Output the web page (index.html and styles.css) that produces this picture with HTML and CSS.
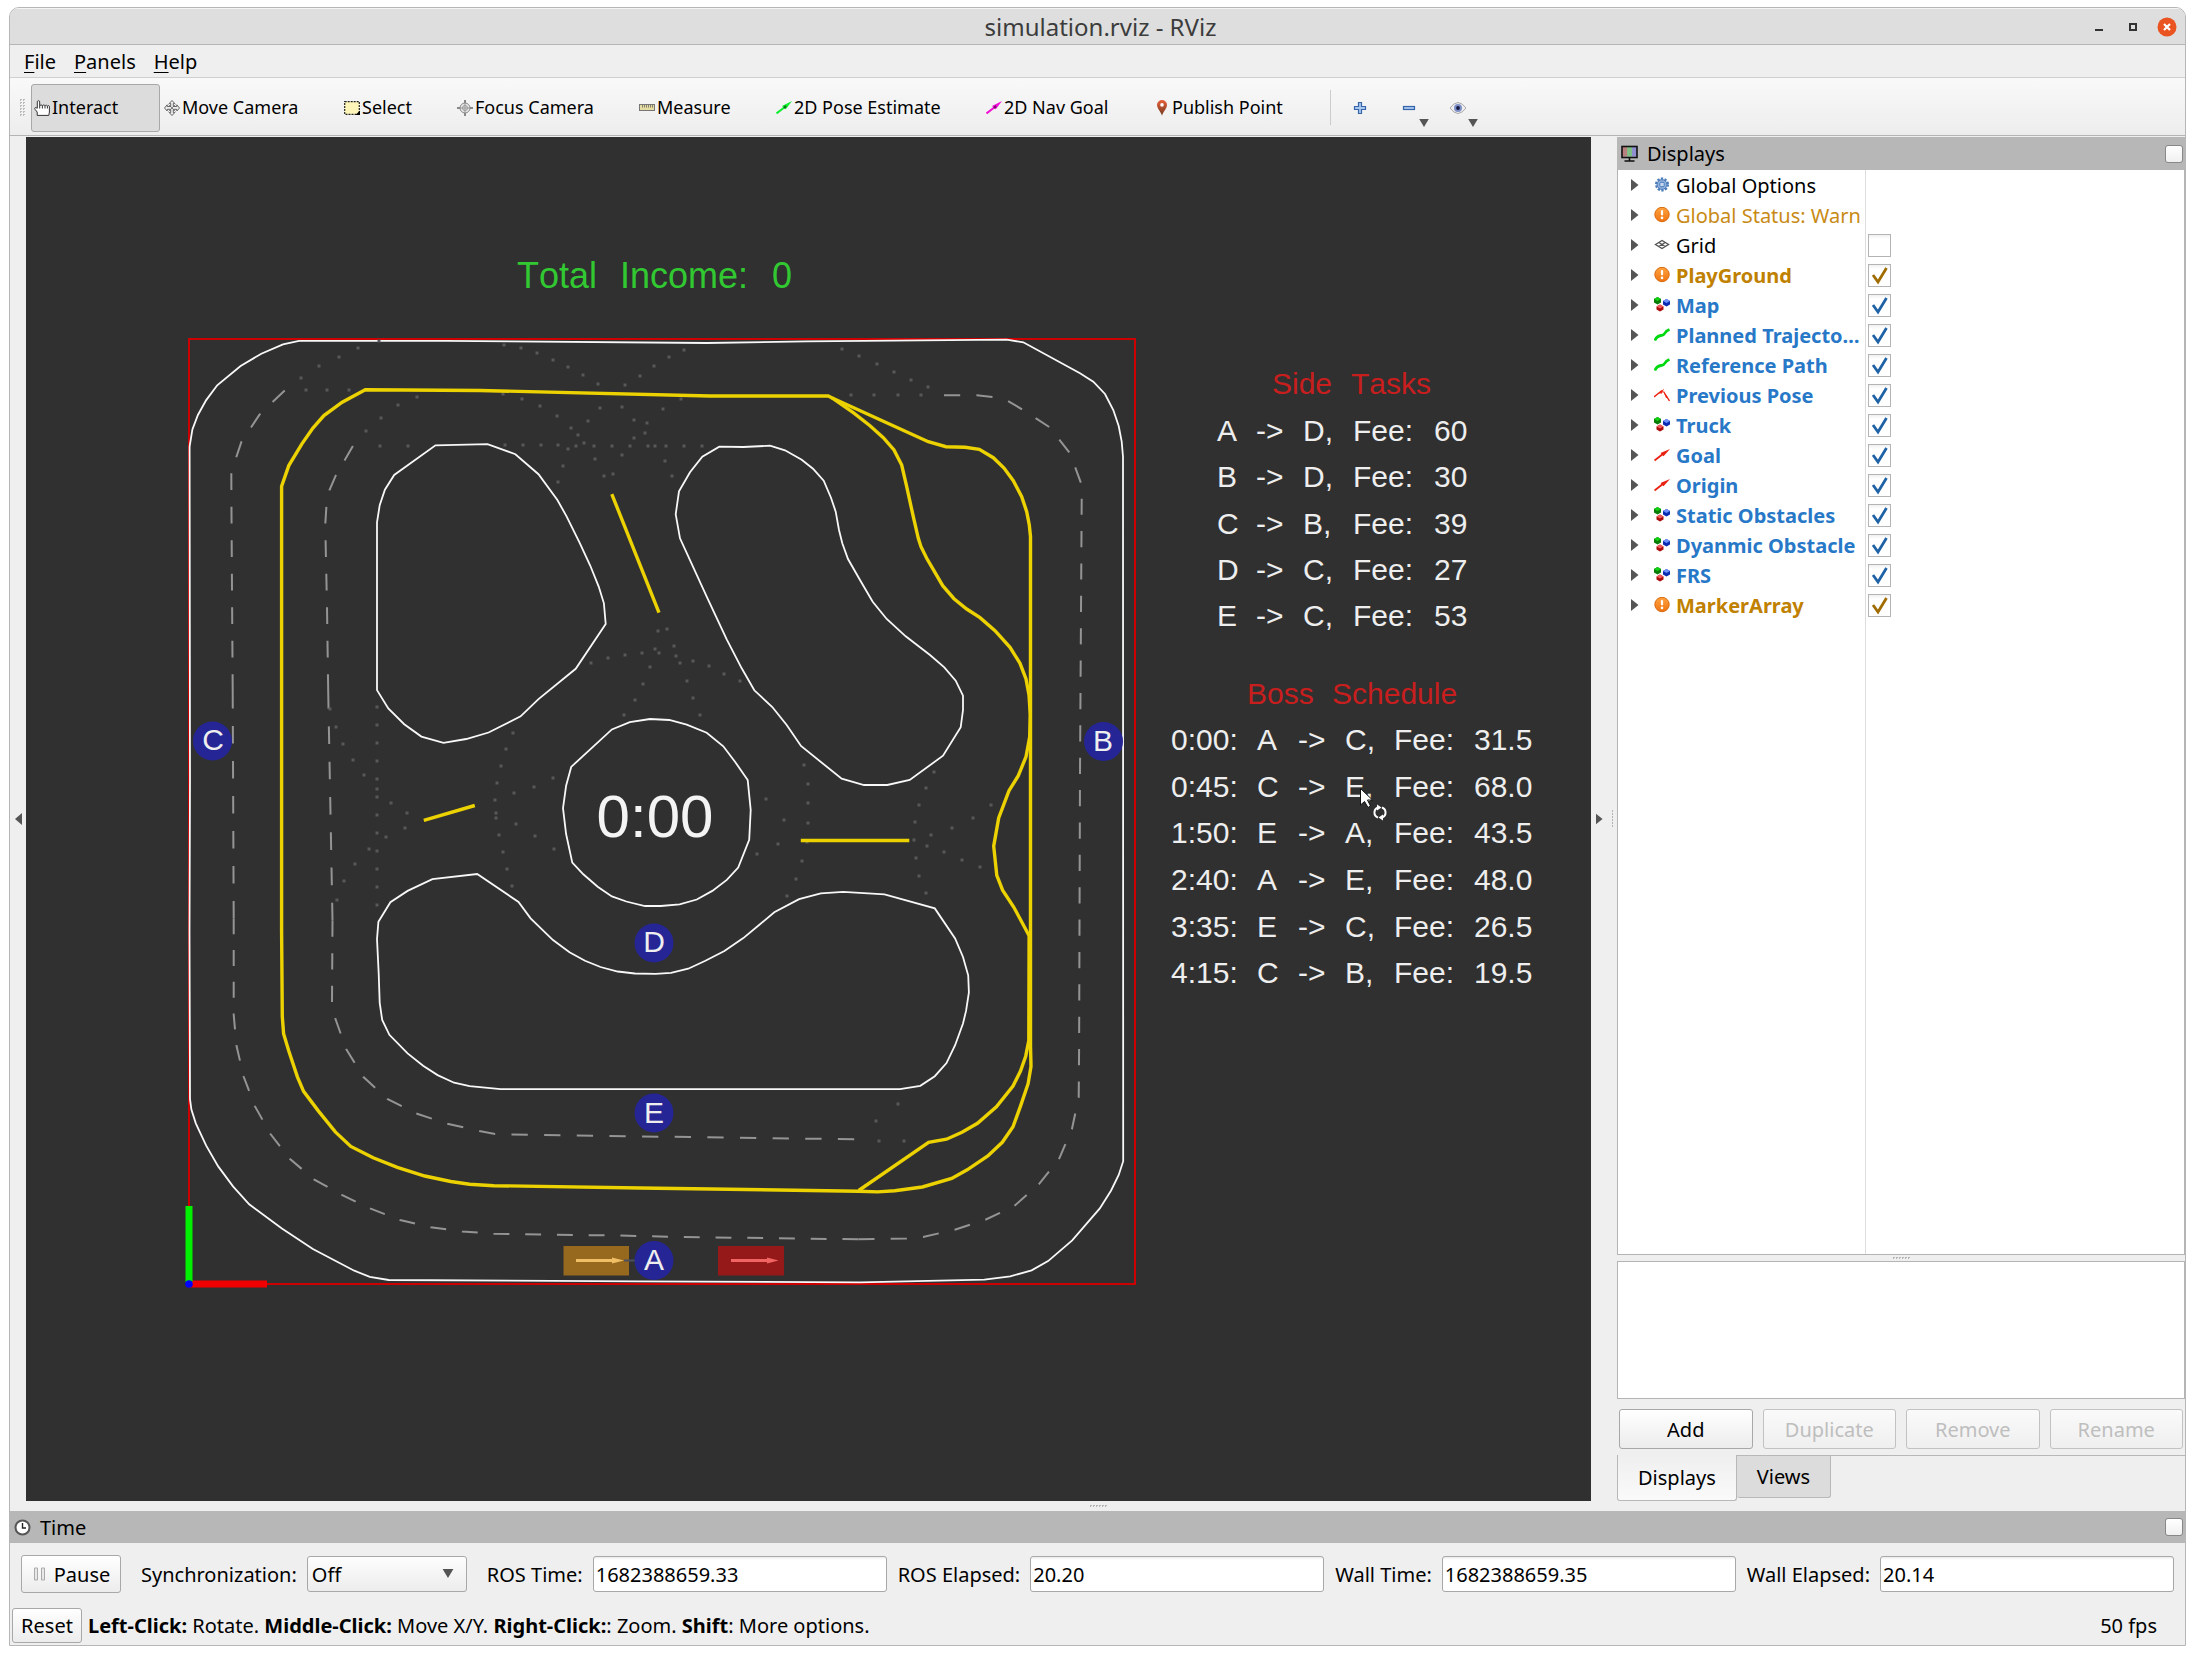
FILE: index.html
```html
<!DOCTYPE html>
<html lang="en">
<head>
<meta charset="utf-8">
<title>simulation.rviz - RViz</title>
<link rel="stylesheet" href="styles.css">
</head>
<body>
<svg class="defs" aria-hidden="true">
  <linearGradient id="orange" x1="0" y1="0" x2="0" y2="1"><stop offset="0" stop-color="#ffa340"/><stop offset="1" stop-color="#ee7410"/></linearGradient>
  <linearGradient id="pin" x1="0" y1="0" x2="0" y2="1"><stop offset="0" stop-color="#e8603a"/><stop offset="1" stop-color="#6e3a20"/></linearGradient>
  <symbol id="i-warn" viewBox="0 0 16 16"><circle cx="8" cy="7.500" r="7.200" fill="url(#orange)" stroke="#d9680c"/><path d="M8 3.200v5" stroke="#fff" stroke-width="2.2"/><circle cx="8" cy="10.900" r="1.3" fill="#fff"/></symbol>
  <symbol id="i-gear" viewBox="0 0 16 16"><circle cx="8" cy="7.500" r="5.900" fill="none" stroke="#4a7ab8" stroke-width="2.200" stroke-dasharray="2.300 1.407"/><circle cx="8" cy="7.500" r="4.900" fill="#8fb2de" stroke="#4a7ab8"/><rect x="5.800" y="5.300" width="4.400" height="4.400" rx="1" fill="#c5d8f0" stroke="#4a7ab8"/></symbol>
  <symbol id="i-grid" viewBox="0 0 16 16"><path d="M1.5 7.500 8 3.500l6.500 4L8 11.500zM4.800 5.500l6.400 4M11.200 5.500l-6.400 4" fill="none" stroke="#555" stroke-width="1.400"/></symbol>
  <symbol id="i-cubes" viewBox="0 0 16 16"><path d="m0 2 3.500-2L7 2v3.500L3.500 7.500 0 5.500z" fill="#077a07"/><path d="m0 2 3.500-2L7 2 3.500 4z" fill="#12d012"/><path d="m9 4 3.500-2L16 4v3.500l-3.500 2-3.500-2z" fill="#0a2cb0"/><path d="m9 4 3.500-2L16 4l-3.500 2z" fill="#6f92ff"/><path d="m2.500 9.500 3.500-2 3.500 2v3L6 14.500l-3.500-2z" fill="#a80c0c"/><path d="m2.500 9.500 3.500-2 3.500 2-3.500 2z" fill="#f25c5c"/></symbol>
  <symbol id="i-path" viewBox="0 0 16 16"><path d="M.8 13.500C2.500 9.500 4.500 8.800 7 8.500s3.200-.8 4-2.500 2-2.500 4.500-3.500" fill="none" stroke="#00d810" stroke-width="2.800"/></symbol>
  <symbol id="i-poses" viewBox="0 0 16 16"><path d="m0 10 8-6.500M9.500 4.500 15.500 14" stroke="#ee2010" stroke-width="1.400"/><path d="m5 6.500 5-5-2 5zM10 6l2 5 2-.5z" fill="#ee2010"/></symbol>
  <symbol id="i-arrow" viewBox="0 0 16 16"><path d="m.5 13.500 9-7" stroke="currentColor" stroke-width="1.800"/><path d="M16 2 9.500 9.200 6.500 6z" fill="currentColor"/></symbol>
  <symbol id="i-expand" viewBox="0 0 8 12"><path d="M0 0l7.500 6L0 12z" fill="#555"/></symbol>
  <symbol id="i-down" viewBox="0 0 12 10"><path d="M0 0h12L6 10z" fill="#555"/></symbol>
</svg>

<div class="window">
  <header class="titlebar">
    <h1 class="title">simulation.rviz - RViz</h1>
    <div class="window-buttons">
      <button class="wbtn" aria-label="Minimize"><svg width="18" height="18" viewBox="0 0 18 18"><path d="M5 12h8" stroke="#333" stroke-width="2"/></svg></button>
      <button class="wbtn" aria-label="Maximize"><svg width="18" height="18" viewBox="0 0 18 18"><rect x="6" y="6" width="6" height="6" fill="none" stroke="#333" stroke-width="2"/></svg></button>
      <button class="wbtn" aria-label="Close"><svg width="20" height="20" viewBox="0 0 20 20"><circle cx="10" cy="10" r="9.500" fill="#e95420"/><path d="m7 7 6 6M13 7l-6 6" stroke="#fff" stroke-width="2.200"/></svg></button>
    </div>
  </header>

  <nav class="menubar">
    <button class="menu"><u>F</u>ile</button>
    <button class="menu"><u>P</u>anels</button>
    <button class="menu"><u>H</u>elp</button>
  </nav>

  <div class="toolbar">
    <span class="grip"></span>
    <div class="tools">
      <button class="tool active"><svg class="ticon" viewBox="0 0 16 16"><path d="M4.500.7c-1 0-1.200.6-1.200 1.200v6.300L1.800 7.600C.7 7.400.4 8.500 1 9.300L3.200 12v3.400h11.600L15.400 12V6.500c0-1.200-1.900-1.200-2 0 0-1.600-2.300-1.600-2.400-.3-.1-1.600-2.400-1.500-2.500-.3-.2-1.200-2.500-1.200-2.800 0v-4c0-.7-.4-1.200-1.200-1.200z" fill="#fff" stroke="#333"/><path d="M5.700 6v2.500M8.400 6v2.500M11 6.200v2.300M13.400 6.500v2" stroke="#333"/></svg>Interact</button>
      <button class="tool"><svg class="ticon" viewBox="0 0 16 16"><path d="M8 .5 10.800 3.500H9.300V6.500h3.500V4.800L15.500 8 12.800 11V9.300H9.300v3.200h1.500L8 15.500 5.200 12.500h1.500V9.300H3.200V11L.5 8l2.700-3.200v1.700h3.500v-3H5.200z" fill="#eee" stroke="#555" stroke-width=".900"/><path d="M4.500 4.500 11.500 11.500M11.500 4.500 4.500 11.500" stroke="#666" stroke-width=".800"/></svg>Move Camera</button>
      <button class="tool"><svg class="ticon" viewBox="0 0 16 16"><rect x=".700" y="1.700" width="14.600" height="12.600" fill="#fdf6b8" stroke="#222" stroke-width="1.200" stroke-dasharray="2 1"/><path d="M16 10.500V15h-4.500z"/></svg>Select</button>
      <button class="tool"><svg class="ticon" viewBox="0 0 16 16"><path d="M8 0v16M0 8h16" stroke="#888" stroke-width="2"/><circle cx="8" cy="8" r="5" fill="#e6e6e6" stroke="#888"/><circle cx="8" cy="8" r="2.500" fill="none" stroke="#999"/><path d="M8 3v10M3 8h10" stroke="#999"/></svg>Focus Camera</button>
      <button class="tool"><svg class="ticon" viewBox="0 0 16 16"><rect x=".500" y="4.500" width="15" height="6" fill="#e4dca0" stroke="#777"/><path d="M3.500 5v2.500M5.500 5v2.500M7.500 5v2.500M9.500 5v2.500M11.500 5v2.500M13.500 5v2.500" stroke="#666" stroke-width=".800"/></svg>Measure</button>
      <button class="tool"><svg class="ticon green" viewBox="0 0 16 16"><path d="m.5 13.500 9-7" stroke="currentColor" stroke-width="2"/><path d="M16 1 9.800 9.200 6 6z" fill="currentColor"/><path d="m8 8 2-2" stroke="#0a6a1a" stroke-width="2"/></svg>2D Pose Estimate</button>
      <button class="tool"><svg class="ticon magenta" viewBox="0 0 16 16"><path d="m.5 13.500 9-7" stroke="currentColor" stroke-width="2"/><path d="M16 1 9.800 9.200 6 6z" fill="currentColor"/><path d="m8 8 2-2" stroke="#7a0a6a" stroke-width="2"/></svg>2D Nav Goal</button>
      <button class="tool"><svg class="ticon" viewBox="0 0 16 16"><path d="M8 15.800C7 11.500 3 8.500 3 4.900a5 4.800 0 0 1 10 0c0 3.600-4 6.600-5 10.900z" fill="url(#pin)"/><circle cx="8" cy="4.900" r="1.800" fill="#fff"/></svg>Publish Point</button>
    </div>
    <span class="separator"></span>
    <button class="mini" aria-label="Add tool"><svg width="14" height="18" viewBox="0 0 14 18"><path d="M5.500 3.500h3v4h4v3h-4v4h-3v-4h-4v-3h4z" fill="#a8c8f0" stroke="#3565a8" stroke-width="1.200"/></svg></button>
    <button class="mini" aria-label="Remove tool"><svg width="14" height="18" viewBox="0 0 14 18"><rect x="1.500" y="7.500" width="11" height="3" fill="#a8c8f0" stroke="#3565a8" stroke-width="1.200"/></svg><svg class="drop" width="12" height="8"><use href="#i-down"/></svg></button>
    <button class="mini" aria-label="Visibility"><svg width="16" height="18" viewBox="0 0 16 18"><path d="M0 9q8-11 16 0-8 11-16 0z" fill="#eee" stroke="#aaa"/><circle cx="8" cy="9" r="4" fill="#7f8fc8"/><circle cx="8" cy="9" r="1.900" fill="#151a40"/></svg><svg class="drop" width="12" height="8"><use href="#i-down"/></svg></button>
  </div>

  <main class="main">
    <button class="collapse" aria-label="Hide left dock"><svg width="7" height="12" viewBox="0 0 7 12"><path d="M7 0v12L0 6z" fill="#555"/></svg></button>
    <svg class="scene" viewBox="26 137 1565 1364" preserveAspectRatio="xMinYMin meet">
      <g class="bounds">
        <path d="M189 339H1135V1284H189z"/>
      </g>
      <g class="wall">
        <path d="M190 780 189.600 446.600 192.400 429.400 197.900 415 206.200 400.100 217.200 385.300 240.600 366 261.300 353.700 283 344.400 299.100 340.900 445.500 340.900 706.700 343 806.700 341.300 1006.700 339.700 1023.300 342.300 1080 373.300 1093.300 381.700 1105 394 1113.300 410 1118.700 426 1121.700 441.700 1123 456.700 1123.200 1161.200 1118.700 1175 1111.100 1190.500 1099.800 1208.400 1072.200 1240.400 1048.100 1261.100 1031.600 1270.400 1010.200 1276.300 984.400 1279.700 860.400 1282.300 640 1281.400 388.700 1280 369.800 1276.900 354.300 1270.700 312.900 1249 281.900 1228.400 249.200 1204.300 233 1186.400 218.200 1166.400 206.200 1145.700 195.800 1123.300 191.400 1109.600 190 1099.200 189.500 932z"/>
        <path d="M435.500 445.300 487.500 444.200 515.400 454.200 538.500 474.200 557.400 500 566.700 516.600 579.800 543.100 590.200 565.500 598.800 586.800 603.900 603.300 605.700 624 575.700 668.800 538.500 699.100 520.600 716.300 488.600 732.500 466.200 739 443.500 742.800 421.400 736.600 404.200 724.200 388.300 708.400 377 690.100 377 522.400 379.700 505.200 384.900 489.700 394.200 474.900z"/>
        <path d="M719.300 446.700 743.300 447 770 445.700 785 450.300 801.700 459.700 813 468.700 823.700 480.700 831 497.700 835.700 511.700 839 530 842.300 543.300 848 559 860 580 872.700 601.700 886.700 619 905.700 636.300 930 655 944.300 667.300 955.700 680.700 963 695.700 963 710 960.700 727.300 943 755.700 909.700 780 887.300 785 864 785 841.700 778.700 801 746 786.700 725 772.300 707 754.300 690.300 741.700 668.300 726.700 639.300 706.700 596.700 680 538.300 675.700 514.300 679 491.300 690 472.300 702.300 456.700z"/>
        <path d="M650 719 669.300 720 686.700 724.700 706.700 732.700 723.300 746.300 735 761.700 747.700 780 750.700 810 749.200 839.900 738.200 867.500 726.800 879.900 712.300 890.900 696.800 899.500 679.600 904.300 660.700 906 645 906 626.300 901.500 611.900 896.400 597.700 886.700 583.300 874.300 572.300 862.600 566.100 834 563 808.200 566.100 785.800 571.200 766.900 611.900 729.400 629.800 722.200z"/>
        <path d="M432.400 879.200 477.200 874 518.500 901.900 530.600 918.400 553 940.100 569.500 952.200 585 960.800 600.500 967 617.700 971.500 634.900 973.500 655.600 973.900 671 972.800 688.200 968.700 705.400 960.800 724.400 951.100 743.300 938.100 758.800 925.300 774.300 912.200 799.100 899.100 820.800 893.300 843.200 891.900 884.500 894.300 934.800 908.400 955.100 938.400 963 957 968.200 975.300 968.900 992.500 966.100 1010.700 963 1023.500 955.100 1045.200 946.500 1063.100 934.800 1076.200 920.300 1085.800 900 1089.200 500.600 1089.200 469.600 1086.100 454.100 1082.700 437.600 1075.100 423.100 1065.800 407.600 1053.400 389.400 1034.800 382.200 1020 379.700 1002.800 378.700 973.500 377 939.100 378.400 921.900 390.400 902.200 407.600 890.900z"/>
      </g>
      <g class="dashed">
        <path pathLength="19" d="M284.700 390.500 259.500 414.600 241.300 442.100 231.300 472 231.500 515 232.700 691"/>
        <path pathLength="13" d="M232.700 691 233.700 918.400"/>
        <path pathLength="53" d="M233.700 918.400 233.700 1014.800 236.500 1045.800 243.700 1076.800 255 1106.400 270.500 1134 289.800 1158.700 313.900 1179.400 341.800 1194.900 370.700 1208.700 400 1220 430.700 1227.300 462 1231.400 493.700 1233.800 620.400 1235.600 684 1237 858.300 1239.300"/>
        <path pathLength="67" d="M858.300 1239.300 906.500 1238.500 923.100 1237 954.800 1229.700 985.400 1219.700 1014.300 1206 1038.800 1184.300 1058.800 1159.500 1071.900 1129.200 1078.700 1097.500 1079.100 1050 1080 774 1081.700 499.300 1081 483 1070 453.300 1049.700 427.300 1022.700 409.700 1008 401 993.300 397 976.700 395.300 944 395.300"/>
        <path pathLength="15" d="M352.900 446 335.600 475.900 329.400 490.300 326.300 507.900 325.300 524.100 325.600 541 327 607 328.200 691.100"/>
        <path pathLength="13" d="M328.200 691.100 332.500 920.500"/>
        <path pathLength="41" d="M332.500 920.500 332 1002.500 335.300 1018.600 346.300 1049.300 363.200 1076.800 387.300 1098.900 416.200 1113.400 447.200 1123.700 479.300 1131 495.100 1134 511.300 1134.400 640 1136.400 854.200 1139.300"/>
      </g>
      <path class="dots" d="M358 348h0M339 357h0M319 366h0M301 378h0M379 341h0M306 390h0M327 390h0M349 390h0M417 397h0M398 405h0M381 418h0M366 431h0M380 446h0M408 446h0M504 345h0M521 348h0M537 353h0M553 360h0M568 367h0M583 375h0M598 384h0M684 350h0M669 357h0M654 366h0M640 376h0M625 385h0M503 394h0M522 399h0M540 406h0M557 416h0M571 428h0M578 435h0M584 443h0M595 459h0M604 476h0M600 408h0M588 421h0M568 449h0M563 466h0M558 482h0M622 407h0M634 420h0M645 433h0M655 446h0M665 461h0M672 476h0M681 399h0M663 409h0M647 423h0M634 438h0M622 455h0M613 474h0M505 445h0M523 445h0M541 445h0M558 445h0M576 446h0M594 446h0M612 446h0M630 446h0M648 446h0M666 446h0M684 446h0M702 446h0M658 631h0M667 629h0M674 646h0M676 656h0M680 663h0M693 661h0M709 666h0M724 674h0M740 681h0M659 653h0M655 649h0M642 653h0M625 655h0M608 658h0M591 663h0M650 667h0M643 684h0M635 700h0M624 715h0M687 681h0M693 698h0M700 715h0M330 709h0M336 727h0M343 744h0M353 760h0M364 775h0M377 707h0M377 725h0M377 743h0M377 761h0M377 779h0M377 789h0M377 797h0M377 815h0M377 833h0M377 851h0M377 869h0M377 887h0M377 905h0M513 733h0M506 749h0M501 766h0M553 778h0M391 803h0M407 813h0M405 828h0M386 837h0M369 849h0M355 864h0M344 881h0M337 900h0M497 783h0M495 800h0M496 813h0M496 818h0M499 835h0M503 852h0M507 869h0M512 886h0M534 787h0M514 793h0M516 824h0M535 836h0M554 849h0M842 349h0M859 356h0M877 364h0M894 372h0M911 380h0M928 387h0M851 395h0M874 395h0M898 395h0M921 395h0M804 765h0M808 784h0M808 803h0M808 823h0M807 842h0M802 861h0M796 879h0M787 896h0M766 799h0M784 820h0M778 844h0M757 854h0M934 772h0M926 788h0M919 805h0M915 822h0M914 840h0M916 858h0M919 876h0M926 893h0M991 805h0M973 818h0M952 828h0M931 835h0M927 846h0M944 852h0M962 860h0M980 867h0M898 1104h0M876 1121h0M879 1141h0M904 1141h0"/>
      <g class="lane">
        <path d="M281.600 780 281.600 486.200 288.800 465.600 301.900 443.900 312.900 428 323.900 415.600 342.200 402.200 365.300 389.800 480 390.500 710 396 828.300 396 831.700 397.700 928.300 441.700 946 446.700 965 447.300 979.300 449.300 993.300 457.700 1004 468 1013.300 480.700 1021.700 496.700 1026.700 511.700 1029.300 525 1030.500 536.700 1030.500 1045.800 1031 1066.500 1028.100 1083.700 1020.500 1106.100 1013 1126.800 1002.300 1142.300 987.800 1156 967.200 1169.800 951.700 1178.400 922.400 1187 894.800 1190.800 877.600 1191.900 858.700 1191.200 640 1188 493.700 1185.700 469.600 1184.300 450.700 1181.500 424.800 1176 397.300 1167.400 373.200 1157.800 350.800 1146.400 335.300 1131.900 318.100 1110.600 303.600 1091.300 297.400 1076.800 288.800 1051 283.600 1033.800 282.300 1016.600 281.600 932z"/>
        <path d="M831.700 397.700 853.300 412.700 870 425.700 883.300 437.700 894 450 901.700 465 906.700 486.700 913.300 516.700 918.300 538.300 921 546.700 926.700 558.300 942.700 585.700 954 598.700 966.700 609 980 617.700 995 630.700 1010 647.300 1020 663.300 1026 679 1029 695 1030.300 715 1029.700 736.700 1026 756.700 1018.300 775.700 1009 790.700 998.700 818 993.700 846.100 996.800 875.400 1002.600 890.200 1013.700 907 1029.100 935.600 1028.800 1040.700 1025.700 1056.200 1020.500 1071 1013 1086.100 996.400 1106.800 977.500 1123.300 962 1132.300 946.500 1139.200 928.600 1142.300 858.700 1190.500"/>
        <path d="M611.800 494.100 659 612.600M423.800 820.300 474.800 805.500M800.800 840.500H909.300"/>
      </g>
      <g class="axes">
        <path stroke="#f00000" d="M189 1284H267"/>
        <path stroke="#00f000" d="M189 1206V1282"/>
        <circle cx="189" cy="1284" r="3.800" fill="#0000ff"/>
      </g>
      <rect x="563.500" y="1246" width="65.500" height="29.500" fill="#96691e"/>
      <path d="M576 1260.500H614" stroke="#f0be64" stroke-width="3"/><path d="M612 1257.500 624 1260.500 612 1263.500z" fill="#f0be64"/>
      <path d="M624 1260.500H640" stroke="#4d5060" stroke-width="2"/>
      <rect x="718" y="1246" width="66" height="29.500" fill="#961919"/>
      <path d="M731 1260.500H768" stroke="#f06464" stroke-width="3"/><path d="M767 1257.500 778.500 1260.500 767 1263.500z" fill="#f06464"/>
      <g class="badges">
        <circle cx="212.500" cy="741" r="19.500"/><circle cx="1103.500" cy="741.500" r="19.500"/><circle cx="654" cy="943" r="19.500"/><circle cx="654" cy="1113" r="19.500"/><circle cx="654" cy="1260.500" r="19.500"/>
        <text x="213" y="750">C</text><text x="1103" y="751">B</text><text x="654" y="952">D</text><text x="654" y="1123">E</text><text x="654" y="1270">A</text>
      </g>
      <text class="clock" x="655" y="837">0:00</text>
      <text class="income" y="288"><tspan x="517">Total </tspan><tspan x="620">Income: </tspan><tspan x="772">0</tspan></text>
      <g class="board">
        <text class="head" y="394"><tspan x="1272">Side </tspan><tspan x="1351">Tasks</tspan></text>
        <text y="441"><tspan x="1217">A </tspan><tspan x="1256">-&gt; </tspan><tspan x="1303">D, </tspan><tspan x="1353">Fee: </tspan><tspan x="1434">60</tspan></text>
        <text y="487"><tspan x="1217">B </tspan><tspan x="1256">-&gt; </tspan><tspan x="1303">D, </tspan><tspan x="1353">Fee: </tspan><tspan x="1434">30</tspan></text>
        <text y="534"><tspan x="1217">C </tspan><tspan x="1256">-&gt; </tspan><tspan x="1303">B, </tspan><tspan x="1353">Fee: </tspan><tspan x="1434">39</tspan></text>
        <text y="580"><tspan x="1217">D </tspan><tspan x="1256">-&gt; </tspan><tspan x="1303">C, </tspan><tspan x="1353">Fee: </tspan><tspan x="1434">27</tspan></text>
        <text y="626"><tspan x="1217">E </tspan><tspan x="1256">-&gt; </tspan><tspan x="1303">C, </tspan><tspan x="1353">Fee: </tspan><tspan x="1434">53</tspan></text>
        <text class="head" y="704"><tspan x="1247">Boss </tspan><tspan x="1332">Schedule</tspan></text>
        <text y="750"><tspan x="1171">0:00: </tspan><tspan x="1257">A </tspan><tspan x="1298">-&gt; </tspan><tspan x="1345">C, </tspan><tspan x="1394">Fee: </tspan><tspan x="1474">31.5</tspan></text>
        <text y="797"><tspan x="1171">0:45: </tspan><tspan x="1257">C </tspan><tspan x="1298">-&gt; </tspan><tspan x="1345">E, </tspan><tspan x="1394">Fee: </tspan><tspan x="1474">68.0</tspan></text>
        <text y="843"><tspan x="1171">1:50: </tspan><tspan x="1257">E </tspan><tspan x="1298">-&gt; </tspan><tspan x="1345">A, </tspan><tspan x="1394">Fee: </tspan><tspan x="1474">43.5</tspan></text>
        <text y="890"><tspan x="1171">2:40: </tspan><tspan x="1257">A </tspan><tspan x="1298">-&gt; </tspan><tspan x="1345">E, </tspan><tspan x="1394">Fee: </tspan><tspan x="1474">48.0</tspan></text>
        <text y="937"><tspan x="1171">3:35: </tspan><tspan x="1257">E </tspan><tspan x="1298">-&gt; </tspan><tspan x="1345">C, </tspan><tspan x="1394">Fee: </tspan><tspan x="1474">26.5</tspan></text>
        <text y="983"><tspan x="1171">4:15: </tspan><tspan x="1257">C </tspan><tspan x="1298">-&gt; </tspan><tspan x="1345">B, </tspan><tspan x="1394">Fee: </tspan><tspan x="1474">19.5</tspan></text>
      </g>
      <g>
        <path d="M1360.500 788.500V805L1364.500 801.500 1368 807.500 1370.500 806 1367.500 800H1372.500z" fill="#fff" stroke="#111"/>
        <g fill="none" stroke="#fff" stroke-width="2"><path d="M1378 817.500A5.300 5.300 0 0 1 1378 807.500M1382 807.500A5.300 5.300 0 0 1 1382 817.500"/></g>
        <path d="M1377 804.500 1381.500 807.500 1377 810.500zM1383 814.500 1378.500 817.500 1383 820.500z" fill="#fff"/>
      </g>
    </svg>
    <button class="collapse right" aria-label="Hide right dock"><svg width="7" height="12"><use href="#i-expand"/></svg></button>

    <aside class="dock">
      <div class="dock-title">
        <svg width="17" height="17" viewBox="0 0 17 17"><path d="M1 1.500h5v10H1z" fill="#b98080"/><path d="M6 1.500h5v10H6z" fill="#7fbf86"/><path d="M11 1.500h5v10h-5z" fill="#8f8fd0"/><rect x="1" y="1.500" width="15" height="11" fill="none" stroke="#111" stroke-width="1.600"/><path d="M8.500 12.500v3M3.500 16h10" stroke="#111" stroke-width="1.600"/></svg>
        <h2>Displays</h2><button class="float" aria-label="Float panel"></button>
      </div>
      <div class="tree-wrap">
        <table class="tree">
          <tbody>
            <tr><th scope="row"><span class="item"><svg class="exp"><use href="#i-expand"/></svg><svg class="ico"><use href="#i-gear"/></svg><span class="name">Global Options</span></span></th><td></td></tr>
            <tr><th scope="row"><span class="item warn"><svg class="exp"><use href="#i-expand"/></svg><svg class="ico"><use href="#i-warn"/></svg><span class="name">Global Status: Warn</span></span></th><td></td></tr>
            <tr><th scope="row"><label class="item" for="c1"><svg class="exp"><use href="#i-expand"/></svg><svg class="ico"><use href="#i-grid"/></svg><span class="name">Grid</span></label></th><td><input id="c1" type="checkbox"></td></tr>
            <tr><th scope="row"><label class="item warn bold" for="c2"><svg class="exp"><use href="#i-expand"/></svg><svg class="ico"><use href="#i-warn"/></svg><span class="name">PlayGround</span></label></th><td><input id="c2" class="amber" type="checkbox" checked></td></tr>
            <tr><th scope="row"><label class="item on bold" for="c3"><svg class="exp"><use href="#i-expand"/></svg><svg class="ico"><use href="#i-cubes"/></svg><span class="name">Map</span></label></th><td><input id="c3" type="checkbox" checked></td></tr>
            <tr><th scope="row"><label class="item on bold" for="c4"><svg class="exp"><use href="#i-expand"/></svg><svg class="ico"><use href="#i-path"/></svg><span class="name">Planned Trajectory</span></label></th><td><input id="c4" type="checkbox" checked></td></tr>
            <tr><th scope="row"><label class="item on bold" for="c5"><svg class="exp"><use href="#i-expand"/></svg><svg class="ico"><use href="#i-path"/></svg><span class="name">Reference Path</span></label></th><td><input id="c5" type="checkbox" checked></td></tr>
            <tr><th scope="row"><label class="item on bold" for="c6"><svg class="exp"><use href="#i-expand"/></svg><svg class="ico"><use href="#i-poses"/></svg><span class="name">Previous Pose</span></label></th><td><input id="c6" type="checkbox" checked></td></tr>
            <tr><th scope="row"><label class="item on bold" for="c7"><svg class="exp"><use href="#i-expand"/></svg><svg class="ico"><use href="#i-cubes"/></svg><span class="name">Truck</span></label></th><td><input id="c7" type="checkbox" checked></td></tr>
            <tr><th scope="row"><label class="item on bold" for="c8"><svg class="exp"><use href="#i-expand"/></svg><svg class="ico red"><use href="#i-arrow"/></svg><span class="name">Goal</span></label></th><td><input id="c8" type="checkbox" checked></td></tr>
            <tr><th scope="row"><label class="item on bold" for="c9"><svg class="exp"><use href="#i-expand"/></svg><svg class="ico red"><use href="#i-arrow"/></svg><span class="name">Origin</span></label></th><td><input id="c9" type="checkbox" checked></td></tr>
            <tr><th scope="row"><label class="item on bold" for="c10"><svg class="exp"><use href="#i-expand"/></svg><svg class="ico"><use href="#i-cubes"/></svg><span class="name">Static Obstacles</span></label></th><td><input id="c10" type="checkbox" checked></td></tr>
            <tr><th scope="row"><label class="item on bold" for="c11"><svg class="exp"><use href="#i-expand"/></svg><svg class="ico"><use href="#i-cubes"/></svg><span class="name">Dyanmic Obstacle</span></label></th><td><input id="c11" type="checkbox" checked></td></tr>
            <tr><th scope="row"><label class="item on bold" for="c12"><svg class="exp"><use href="#i-expand"/></svg><svg class="ico"><use href="#i-cubes"/></svg><span class="name">FRS</span></label></th><td><input id="c12" type="checkbox" checked></td></tr>
            <tr><th scope="row"><label class="item warn bold" for="c13"><svg class="exp"><use href="#i-expand"/></svg><svg class="ico"><use href="#i-warn"/></svg><span class="name">MarkerArray</span></label></th><td><input id="c13" class="amber" type="checkbox" checked></td></tr>
            <tr class="filler"><th></th><td></td></tr>
          </tbody>
        </table>
      </div>
      <div class="splitter"></div>
      <div class="help"></div>
      <div class="actions">
        <button class="btn">Add</button>
        <button class="btn" disabled>Duplicate</button>
        <button class="btn" disabled>Remove</button>
        <button class="btn" disabled>Rename</button>
      </div>
      <div class="tabs">
        <button class="tab current">Displays</button>
        <button class="tab">Views</button>
      </div>
    </aside>
  </main>

  <div class="splitter wide"></div>

  <section class="time">
    <div class="dock-title">
      <svg width="17" height="17" viewBox="0 0 17 17"><circle cx="8.500" cy="8.500" r="7" fill="#fff" stroke="#555" stroke-width="2"/><path d="M8.500 4v5H12" fill="none" stroke="#222" stroke-width="1.400"/></svg>
      <h2>Time</h2><button class="float" aria-label="Float panel"></button>
    </div>
    <form class="time-row">
      <button type="button" class="btn pause"><svg width="14" height="14" viewBox="0 0 14 14"><path d="M1.500 1h3v12h-3zM8.500 1h3v12h-3z" fill="#e8e8e8" stroke="#aaa"/></svg>Pause</button>
      <div class="field sync"><label for="sync">Synchronization:</label><span class="select"><select id="sync"><option>Off</option><option>Exact</option><option>Approximate</option></select><svg class="caret" width="12" height="9"><use href="#i-down"/></svg></span></div>
      <div class="field"><label for="t1">ROS Time:</label><input id="t1" type="text" value="1682388659.33" readonly></div>
      <div class="field"><label for="t2">ROS Elapsed:</label><input id="t2" type="text" value="20.20" readonly></div>
      <div class="field"><label for="t3">Wall Time:</label><input id="t3" type="text" value="1682388659.35" readonly></div>
      <div class="field"><label for="t4">Wall Elapsed:</label><input id="t4" type="text" value="20.14" readonly></div>
    </form>
  </section>

  <footer class="status">
    <button class="btn reset">Reset</button>
    <p><b>Left-Click:</b> Rotate. <b>Middle-Click:</b> Move X/Y. <b>Right-Click:</b>: Zoom. <b>Shift</b>: More options.</p>
    <span class="fps">50 fps</span>
  </footer>
</div>
</body>
</html>
```
FILE: styles.css
```css
* { box-sizing: border-box; }

body {
  margin: 0;
  padding: 7px 9px 9px;
  background: #fff;
  color: #000;
  font: 20px/27px "Noto Sans", sans-serif;
}

button, input, select { font: inherit; color: inherit; margin: 0; }
button { cursor: default; }
h1, h2, p { margin: 0; font: inherit; }
.defs { position: absolute; width: 0; height: 0; }

.window {
  display: flex;
  flex-direction: column;
  min-height: calc(100vh - 16px);
  border: 1px solid #b6b6b6;
  border-radius: 10px 10px 0 0;
  background: #efefef;
  overflow: hidden;
}

/* Title bar */
.titlebar {
  display: grid;
  grid-template-columns: 1fr auto 1fr;
  align-items: center;
  height: 37px;
  padding: 0 8px 0 14px;
  background: #dedede;
  border-top: 1px solid #f4f4f4;
  border-bottom: 1px solid #b6b6b6;
}
.title { grid-column: 2; font-size: 24px; color: #3c3c3c; }
.window-buttons { display: flex; justify-content: flex-end; gap: 14px; }
.wbtn { display: grid; place-items: center; width: 20px; height: 20px; padding: 0; border: 0; background: none; }

/* Menus and tools */
.menubar {
  display: flex;
  gap: 18px;
  height: 33px;
  padding: 0 14px;
  border-bottom: 1px solid #d0d0d0;
}
.menu { padding: 0; border: 0; background: none; }
.menu u { text-underline-offset: 3px; text-decoration-thickness: 1px; }

.toolbar {
  display: flex;
  align-items: center;
  height: 58px;
  padding: 2px 0 0 9px;
  background: linear-gradient(#f9f9f9, #ededed);
  border-bottom: 1px solid #b4b4b4;
}
.grip { width: 6px; height: 18px; margin-right: 6px; background: conic-gradient(#bbb 25%, transparent 0) 0 0 / 3px 3px; }
.tools { display: grid; grid-template-columns: 130px 180px 113px 182px 137px 210px 168px 179px; }
.tool {
  display: flex;
  align-items: center;
  gap: 2px;
  width: calc(100% - 1px);
  height: 48px;
  padding: 0 2px;
  border: 1px solid transparent;
  border-radius: 3px;
  background: none;
  font-size: 18px;
  white-space: nowrap;
}
.tool.active { background: #dcdcdc; border-color: #a8a8a8; }
.ticon { flex: none; width: 16px; height: 16px; }
.green { color: #10ee30; }
.magenta { color: #f010d8; }
.separator { width: 1px; height: 35px; background: #ccc; }
.mini { position: relative; display: grid; place-items: center; width: 49px; height: 40px; padding: 0; border: 0; background: none; }
.separator + .mini { margin-left: 4px; }
.drop { position: absolute; left: 34px; bottom: 1px; }

/* Central area */
.main {
  display: grid;
  grid-template-columns: 16px minmax(0, 1fr) 26px 568px;
  flex: 1;
  margin-top: 1px;
}
.collapse { display: flex; align-items: center; justify-content: center; padding: 0; border: 0; background: none; }
.collapse.right { justify-content: flex-start; padding-left: 5px; }
.collapse.right::after { content: ""; width: 2px; height: 18px; margin-left: 8px; background: conic-gradient(#b4b4b4 25%, transparent 0) 0 0 / 3px 3px; }
.scene { display: block; width: 100%; height: 100%; background: #303030; font-family: "Liberation Sans", sans-serif; font-kerning: none; }
.bounds path { fill: none; stroke: #cc0000; stroke-width: 2; }
.wall path { fill: none; stroke: #f8f8f8; stroke-width: 1.800; }
.lane path { fill: none; stroke: #ecd200; stroke-width: 3.400; }
.dashed path { fill: none; stroke: #949494; stroke-width: 2; stroke-dasharray: 1 1; }
.dots { stroke: #585858; stroke-width: 3; stroke-linecap: square; }
.axes path { stroke-width: 7; }
.badges circle { fill: #252596; }
.badges text { fill: #eee; font-size: 30px; text-anchor: middle; }
.clock { fill: #f4f4f4; font-size: 60px; text-anchor: middle; }
.income { fill: #32c832; font-size: 36px; }
.board text { fill: #eee; font-size: 30px; }
.board .head { fill: #c81e1e; }

/* Docks */
.dock { display: flex; flex-direction: column; min-width: 0; }
.dock-title {
  display: flex;
  align-items: center;
  gap: 9px;
  height: 33px;
  padding: 0 2px 0 4px;
  background: #b7b7b7;
}
.dock-title h2 { flex: 1; }
.float { width: 18px; height: 18px; padding: 0; border: 1px solid #888; border-radius: 3px; background: linear-gradient(#fff, #f0f0f0); }

.tree-wrap { display: flex; flex: 1; border: 1px solid #b4b4b4; border-top: 0; background: #fff; }
.tree { width: 100%; border-collapse: collapse; table-layout: fixed; }
.tree tr { height: 30px; }
.tree tr.filler { height: auto; }
.tree th { width: 247px; padding: 0; border-right: 1px solid #ddd; font-weight: 400; text-align: left; }
.tree td { padding: 0 0 0 2px; }
.item { display: flex; align-items: center; height: 30px; padding: 0 2px 0 13px; }
.exp { flex: none; width: 8px; height: 12px; margin-right: 15px; }
.ico { flex: none; width: 16px; height: 16px; margin-right: 6px; }
.name { overflow: hidden; white-space: nowrap; text-overflow: ellipsis; }
.warn { color: #c88a14; }
.bold { font-weight: 700; }
.warn.bold { color: #c08000; }
.on { color: #2878c8; }
.red { color: #e82010; }
.tree input {
  display: block;
  appearance: none;
  width: 23px;
  height: 23px;
  border: 1px solid #b4b4b4;
  background: linear-gradient(#f0f0f0, #fff 4px);
}
.tree input:checked {
  background: url("data:image/svg+xml,%3Csvg xmlns='http://www.w3.org/2000/svg' viewBox='0 0 21 21'%3E%3Cpath d='M4 10l5 7 8.500-14' fill='none' stroke='%231f62a6' stroke-width='2.800'/%3E%3C/svg%3E"), linear-gradient(#f0f0f0, #fff 4px);
}
.tree input.amber:checked {
  background: url("data:image/svg+xml,%3Csvg xmlns='http://www.w3.org/2000/svg' viewBox='0 0 21 21'%3E%3Cpath d='M4 10l5 7 8.500-14' fill='none' stroke='%23a06c00' stroke-width='2.800'/%3E%3C/svg%3E"), linear-gradient(#f0f0f0, #fff 4px);
}

.splitter { display: grid; place-items: center; height: 6px; }
.splitter::after { content: ""; width: 18px; height: 2px; background: conic-gradient(#b4b4b4 25%, transparent 0) 0 0 / 3px 3px; }
.splitter.wide { height: 10px; }
.help { height: 138px; border: 1px solid #b4b4b4; background: #fff; }
.actions { display: grid; grid-template-columns: repeat(4, 1fr); gap: 10px; padding: 10px 2px 6px; }
.btn {
  display: flex;
  align-items: center;
  justify-content: center;
  height: 40px;
  padding: 0;
  border: 1px solid #a8a8a8;
  border-radius: 3px;
  background: linear-gradient(#fff, #ececec);
}
.btn:disabled { color: #bebebe; border-color: #c2c2c2; background: linear-gradient(#fafafa, #efefef); }
.tabs { display: flex; align-items: flex-start; height: 46px; border-top: 1px solid #b8b8b8; }
.tab { height: 42px; padding: 0 20px 1px; border: 1px solid #b8b8b8; border-width: 0 1px 1px 0; border-radius: 0 0 3px 3px; background: #dcdcdc; }
.tab.current { height: 46px; margin-top: -1px; padding: 0 20px; border-left-width: 1px; background: linear-gradient(#efefef, #fafafa); }

/* Time panel */
.time .dock-title { height: 32px; }
.time-row { display: flex; align-items: center; gap: 11px; padding: 12px 11px 0; }
.pause { gap: 7px; width: 100px; height: 38px; padding-left: 1px; }
.field { display: flex; align-items: center; flex: 1 1 auto; gap: 10px; }
.field label { white-space: nowrap; }
.field input { flex: 1; width: 100px; height: 36px; padding: 0 2px; border: 1px solid #a8a8a8; border-radius: 3px; background: linear-gradient(#ececec, #fff 3px); }
.sync { flex: none; margin: 0 9px; }
.select { position: relative; display: block; width: 160px; }
.select select { appearance: none; width: 100%; height: 36px; padding: 0 4px; border: 1px solid #a8a8a8; border-radius: 3px; background: linear-gradient(#fdfdfd, #ececec); }
.caret { position: absolute; right: 13px; top: 13px; pointer-events: none; }

.status { display: flex; align-items: center; gap: 6px; padding: 15px 28px 2px 2px; }
.status p { flex: 1; }
.reset { width: 70px; height: 35px; }
```
